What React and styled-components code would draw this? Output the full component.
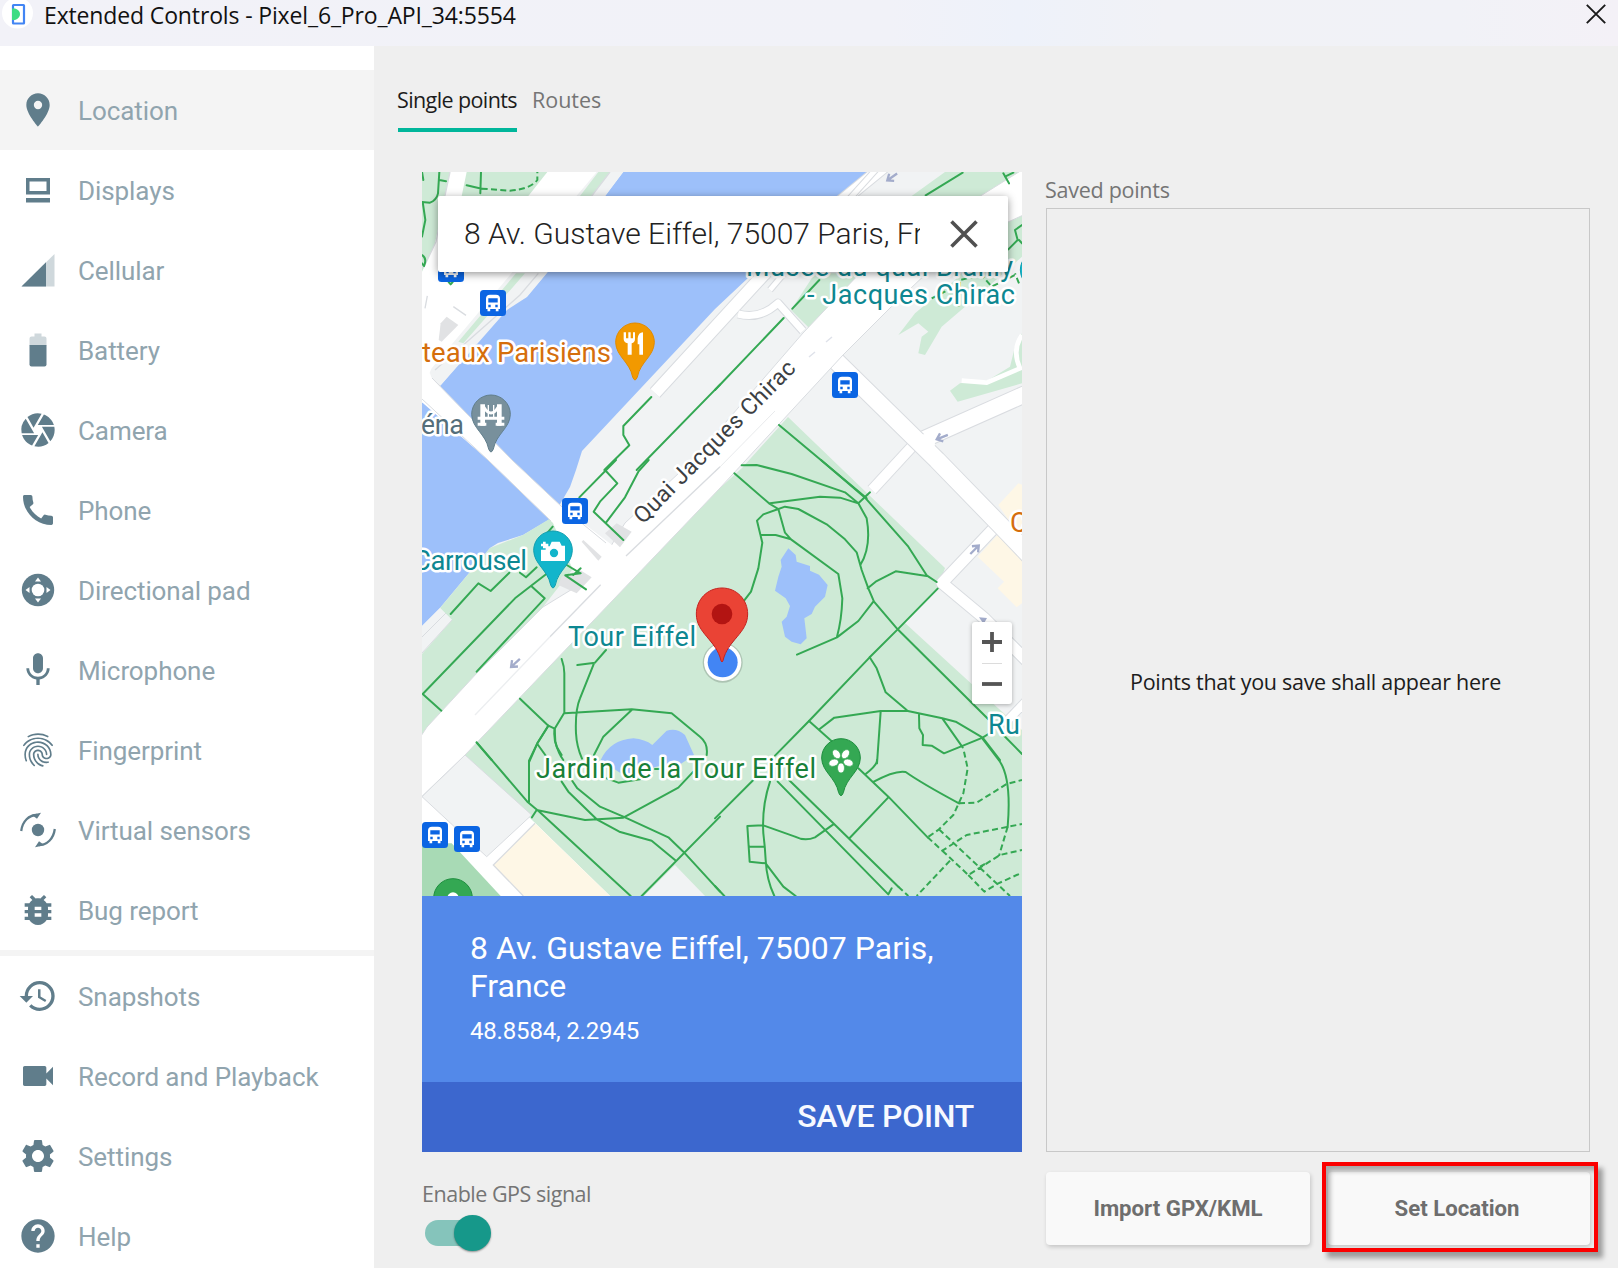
import React from 'react';
import styled, { createGlobalStyle } from 'styled-components';
import {
  MdLocationOn, MdCamera, MdCall, MdMic, MdFingerprint, MdBugReport,
  MdHistory, MdVideocam, MdSettings, MdHelp,
} from 'react-icons/md';

const GlobalStyle = createGlobalStyle`
  * { box-sizing: border-box; }
  body { margin: 0; background: #efefef; overflow: hidden; }
  button { border: 0; padding: 0; background: none; font: inherit; color: inherit; }
`;

const UI = '"Open Sans", "Noto Sans", sans-serif';
const ROBOTO = 'Roboto, "Liberation Sans", sans-serif';

/* ---------- window frame ---------- */

const Window = styled.div`
  display: grid;
  grid-template: 46px minmax(0, 1fr) / 374px minmax(0, 1fr);
  width: 1618px;
  height: 1268px;
  overflow: hidden;
  background: #efefef;
  font-family: ${ROBOTO};
`;

const TitleBar = styled.header`
  grid-column: 1 / -1;
  display: flex;
  align-items: flex-start;
  padding-left: 2px;
  background: linear-gradient(90deg, #f2f2f8 0%, #f1f2f8 55%, #eef2fa 63%, #f1f2f6 72%, #f1f2f7 90%, #f4f1f7 100%);
`;

const AppLogo = styled.svg`
  width: 32px;
  height: 30px;
`;

const Title = styled.h1`
  flex: 1;
  margin: -1px 0 0 10px;
  font: 400 23px/32px ${UI};
  letter-spacing: -0.14px;
  color: #111;
`;

const CloseButton = styled.button`
  width: 20px;
  height: 20px;
  margin: 4px 12px 0 0;
  svg { display: block; }
`;

/* ---------- side navigation ---------- */

const Sidebar = styled.nav`
  padding-top: 24px;
  background: #fff;
  overflow: hidden;
`;

const NavItem = styled.a`
  display: flex;
  align-items: center;
  gap: 20px;
  height: 80px;
  padding-left: 18px;
  background: ${(p) => (p.$active ? '#f4f4f4' : 'transparent')};
  color: #90a4ae;
  font-size: 26px;
  letter-spacing: -0.08px;
  svg { width: 40px; height: 40px; color: #607d8b; flex: none; }
`;

const NavLabel = styled.span`
  padding-top: 2px;
  line-height: 32px;
`;

const NavDivider = styled.hr`
  height: 6px;
  margin: 0;
  border: 0;
  background: #f4f4f4;
`;

/* ---------- main pane ---------- */

const Main = styled.main`
  display: flex;
  flex-direction: column;
  padding: 39px 28px 0 23px;
`;

const Tabs = styled.div`
  display: flex;
  gap: 15px;
  margin-bottom: 40px;
`;

const Tab = styled.button`
  height: 47px;
  font: 400 21.5px/30px ${UI};
  letter-spacing: ${(p) => (p.$active ? '-0.6px' : '0')};
  color: ${(p) => (p.$active ? '#1c1c1c' : '#757575')};
  padding-bottom: 17px;
  background: linear-gradient(#00b69b, #00b69b) no-repeat 1px 100% / ${(p) => (p.$active ? '120px 4px' : '0 0')};
`;

const Columns = styled.div`
  display: grid;
  grid-template-columns: 600px 544px;
  gap: 24px;
  margin-left: 25px;
`;

const Column = styled.section`
  display: flex;
  flex-direction: column;
`;

const Caption = styled.p`
  margin: 0 0 0 ${(p) => p.$shift || 0}px;
  padding-top: ${(p) => p.$top}px;
  font: 400 21.5px/30px ${UI};
  letter-spacing: ${(p) => p.$tracking}px;
  color: #757575;
`;

/* ---------- map card ---------- */

const MapArea = styled.div`
  position: relative;
  height: 724px;
  overflow: hidden;
`;

const SearchBox = styled.div`
  position: absolute;
  top: 24px;
  left: 16px;
  width: 570px;
  height: 76px;
  display: flex;
  align-items: center;
  padding: 0 30px 0 26px;
  justify-content: space-between;
  background: #fff;
  border-radius: 2px;
  box-shadow: 0 2px 9px rgba(0, 0, 0, 0.42);
`;

const SearchText = styled.span`
  width: 456px;
  overflow: hidden;
  white-space: nowrap;
  font-size: 30px;
  font-weight: 300;
  line-height: 40px;
  color: #222;
`;

const ZoomControl = styled.div`
  position: absolute;
  top: 450px;
  left: 550px;
  width: 40px;
  height: 82px;
  display: flex;
  flex-direction: column;
  align-items: center;
  background: #fff;
  border-radius: 3px;
  box-shadow: 0 1px 4px rgba(0, 0, 0, 0.3);
`;

const ZoomButton = styled.button`
  display: grid;
  place-items: center;
  width: 20px;
  height: 41px;
  padding-bottom: 1px;
  & + & { border-top: 1px solid #dcdcdc; padding-bottom: 0; }
`;

const Place = styled.div`
  height: 186px;
  padding: 33px 48px 0;
  background: #5389e9;
  color: #fff;
`;

const PlaceName = styled.h2`
  margin: 0 0 11px;
  font-size: 32px;
  font-weight: 400;
  line-height: 38px;
`;

const PlaceCoords = styled.p`
  margin: 0;
  font-size: 24px;
  line-height: 30px;
  letter-spacing: -0.18px;
`;

const SaveButton = styled.button`
  height: 70px;
  padding-right: 48px;
  background: #3c67ce;
  color: #f7f9ff;
  text-align: right;
  font-size: 32px;
  font-weight: 500;
  line-height: 68px;
  padding-bottom: 2px;
  letter-spacing: -0.25px;
`;

const Switch = styled.button`
  display: flex;
  align-items: center;
  justify-content: flex-end;
  width: 63px;
  height: 26px;
  margin: 11px 0 0 3px;
  border-radius: 13px;
  background: #85c4bb;
`;

const SwitchThumb = styled.span`
  width: 37px;
  height: 36px;
  flex: none;
  margin-right: -3px;
  border-radius: 50%;
  background: #16988a;
  box-shadow: 0 1px 2px rgba(0, 0, 0, 0.4);
`;

/* ---------- saved points ---------- */

const SavedList = styled.div`
  display: grid;
  place-items: center;
  height: 944px;
  margin-top: 3px;
  padding: 4px 5px 0 0;
  border: 1.5px solid #c8c8c8;
  font: 400 21.5px/30px ${UI};
  letter-spacing: -0.28px;
  color: #1c1c1c;
`;

const Actions = styled.div`
  display: grid;
  grid-template-columns: 264px 262px;
  gap: 18px;
  margin-top: 20px;
`;

const ActionButton = styled.button`
  position: relative;
  height: 73px;
  border-radius: 4px;
  background: #f9f9f9;
  box-shadow: 1px 2px 4px rgba(0, 0, 0, 0.18);
  color: #6e6e6e;
  font-size: 22.2px;
  font-weight: 700;
  padding: 0 ${(p) => p.$inset || 0}px 1px 0;
`;

const Highlight = styled.span`
  position: absolute;
  inset: -10px -8px -7px -6px;
  border: 4px solid #fb0000;
  box-shadow: 5px 6px 5px rgba(0, 0, 0, 0.35), inset 4px 5px 5px rgba(0, 0, 0, 0.3);
`;

/* ---------- navigation icons drawn by hand ---------- */

const DisplaysIcon = () => (
  <svg viewBox="0 0 40 40">
    <path fill="currentColor" fillRule="evenodd" d="M8 8h24v16.5H8zM11.5 11.500v9.500h17v-9.500zM8 28h24v4.500H8z" />
  </svg>
);

const CellularIcon = () => (
  <svg viewBox="0 0 40 40">
    <path fill="#cfd8dc" d="M3.500 36.500L36.500 4v32.500z" />
    <path fill="currentColor" d="M3.500 36.500L28 12.300v24.200z" />
  </svg>
);

const BatteryIcon = () => (
  <svg viewBox="0 0 40 40">
    <path fill="#cfd8dc" d="M16.500 3.500h7V6.500h3q2 0 2 2V15.500H11.500V8.500q0-2 2-2h3z" />
    <path fill="currentColor" d="M11.500 15h17v19.500q0 2-2 2h-13q-2 0-2-2z" />
  </svg>
);

const DpadIcon = () => (
  <svg viewBox="0 0 40 40">
    <circle cx="20" cy="20" r="16.200" fill="currentColor" />
    <circle cx="20" cy="20" r="6.300" fill="#fff" />
    <path fill="#fff" d="M20 7.500l3 4h-6zM20 32.500l3-4h-6zM7.500 20l4-3v6zM32.500 20l-4-3v6z" />
  </svg>
);

const SensorsIcon = () => (
  <svg viewBox="0 0 40 40">
    <circle cx="20" cy="20" r="6.200" fill="currentColor" />
    <g fill="none" stroke="currentColor" strokeWidth="2.300">
      <path d="M3.200 21C4.500 11 11 5 19 5" />
      <path d="M36.800 19C35.500 29 29 35 21 35" />
    </g>
    <path fill="currentColor" d="M13.500 4.800L23 2.800 19 8.800zM26.500 35.200L17 37.200 21 31.200z" />
  </svg>
);

const NAV = [
  { label: 'Location', icon: MdLocationOn, active: true },
  { label: 'Displays', icon: DisplaysIcon },
  { label: 'Cellular', icon: CellularIcon },
  { label: 'Battery', icon: BatteryIcon },
  { label: 'Camera', icon: MdCamera },
  { label: 'Phone', icon: MdCall },
  { label: 'Directional pad', icon: DpadIcon },
  { label: 'Microphone', icon: MdMic },
  { label: 'Fingerprint', icon: MdFingerprint },
  { label: 'Virtual sensors', icon: SensorsIcon },
  { label: 'Bug report', icon: MdBugReport },
  { divider: true, label: 'divider' },
  { label: 'Snapshots', icon: MdHistory },
  { label: 'Record and Playback', icon: MdVideocam },
  { label: 'Settings', icon: MdSettings },
  { label: 'Help', icon: MdHelp },
];

/* ---------- map drawing ---------- */

const MapSvg = styled.svg`
  display: block;
  font-family: ${ROBOTO};
`;

const MapLabel = styled.text`
  font-size: ${(p) => p.$size || 27}px;
  font-weight: ${(p) => p.$weight || 400};
  fill: ${(p) => p.$color};
  stroke: #fff;
  stroke-width: 5px;
  stroke-linejoin: round;
  paint-order: stroke;
`;

const TEAL = '#0d8791';

// Detail is drawn in tiles of 3 units per pixel; x and y are the tile's corner.
const Tile = ({ x, y, children }) => (
  <g transform={`translate(${x} ${y}) scale(0.33333)`}>{children}</g>
);

const Road = ({ d, w }) => (
  <g fill="none" strokeLinejoin="round">
    <path d={d} stroke="#d9dce0" strokeWidth={w + 2} />
    <path d={d} stroke="#fff" strokeWidth={w} />
  </g>
);

const Paths = ({ d, dashed }) => (
  <path d={d} fill="none" stroke="#34a853" strokeWidth="6" strokeLinejoin="round"
    strokeLinecap={dashed ? 'butt' : 'round'} strokeDasharray={dashed ? '18 10' : undefined} />
);

const Pin = ({ x, y, color, edge, children }) => (
  <g transform={`translate(${x} ${y})`}>
    <path d="M-58 0A58 58 0 0 1 58 0C57 42 16 58 7 104Q0 122-7 104C-16 58-57 42-58 0Z" fill={color} stroke={edge} strokeWidth="3" />
    {children}
  </g>
);

const BusStop = ({ x, y }) => (
  <g transform={`translate(${x} ${y})`}>
    <rect x="-13" y="-13" width="26" height="26" rx="3.500" fill="#0b65e3" />
    <path fill="#fff" fillRule="evenodd" d="M-7-4.500Q-7-8.300-3-8.300H3Q7-8.300 7-4.500V6H5.500V8.300H2.800V6H-2.800V8.300H-5.500V6H-7zM-4.700-4.800V-.600H4.700V-4.800zM-4.700 1.800V4.200H-2.300V1.800zM2.300 1.800V4.200H4.700V1.800z" />
  </g>
);

const Arrow = ({ x, y, r }) => (
  <path transform={`translate(${x} ${y}) rotate(${r})`} d="M-20 0H14M0-13L16 0 0 13" fill="none" stroke="#a3accb" strokeWidth="7" />
);

const ParisMap = () => (
  <MapSvg width="600" height="724" viewBox="422 172 600 724">
    <rect x="422" y="172" width="600" height="724" fill="#f1f3f4" />

    {/* Seine */}
    <path fill="#9dc0fa" d="M623 172H880L848 195 748 278 715 309 582 451 576 470 570 487 552 518 523 535 498 543 490 548 440 608 422 626V403L441 385 507 310 527 297 547 273 606 195Z" />

    {/* north-west bank */}
    <Tile x={410} y={160}>
      <path fill="#fff" d="M36 36H560L300 345 65 625 36 690Z" />
      <path fill="#fff" d="M36 700L65 655 60 640 36 640Z" />
      <path fill="#f1f3f4" d="M600 36H640L585 108 412 336 350 410 290 445 92 675 65 652 300 400Z" />
      <path fill="#ceead6" d="M565 36H600L545 108H510ZM318 340H345L160 550 145 545Z" />
      <path fill="#ceead6" d="M36 36H120L100 130 75 250 36 335Z" />
      <path fill="#ceead6" d="M170 36H412L355 108H155Z" />
      <path fill="#e1e2e4" d="M92 490L110 470 145 495 95 545 86 540Z" />
      <path fill="none" stroke="#d9dce0" strokeWidth="4" d="M130 440L168 466M45 445L52 408M600 36L545 108M385 340L330 405 75 630M120 36L100 130 78 245 40 325M36 722L62 655 92 680" />
      <Paths d="M36 36L40 60M88 36L84 100Q80 120 60 128L36 126M88 60L108 64M213 36L211 100M170 76L215 86M38 126L46 180 36 230M36 285Q52 295 42 318L36 310M116 366L122 373 128 366" />
      <Paths dashed d="M215 86L300 92Q360 88 382 60L382 36" />
    </Tile>

    {/* right bank quay */}
    <Road d="M1010 150L892 160 800 235 655 393" w={12} />
    <Road d="M880 165L808 245 770 290" w={5} />
    <Road d="M738 314Q760 320 778 303L803 331" w={7} />
    <Tile x={715} y={160}>
      <path fill="#ceead6" d="M690 36H921V60L800 108H590ZM870 190L921 165V290L820 380 680 500 630 585 610 580 620 530 640 515 610 490 550 525 600 460 720 360Z" />
      <path fill="#ceead6" d="M300 340H420L440 345 283 505 228 450Z" />
      <path fill="#ceead6" d="M735 670L705 692 728 725 921 670V520L900 560 885 620 820 660Z" />
      <path fill="none" stroke="#fff" strokeWidth="14" d="M740 662L815 668 915 625Q890 570 921 525" />
    </Tile>

    {/* gardens */}
    <path fill="#ceead6" d="M551 518L523 535 490 548 440 608 452 620 422 652V745L427 727 477 673 543 607 575 566 555 525Z" />
    <path fill="#f1f3f4" d="M440 608L452 620 422 654V626Z" />
    <path fill="none" stroke="#d9dce0" d="M446 613L422 637M452 620L422 653" />
    <path fill="#ceead6" d="M720 488L742 468 788 417 843 470 945 568 938 588 905 623 998 708 1022 730V896H610L535 823 460 755Z" />
    <path fill="#f1f3f4" d="M675 865L705 896H644Z" />

    {/* south-west corner */}
    <Tile x={410} y={700}>
      <path fill="#fff" d="M165 165L600 588H36V290Z" />
      <path fill="#f1f3f4" stroke="#d9dce0" strokeWidth="3" d="M165 165L365 345 230 470 36 290Z" />
      <path fill="#fef7e6" d="M375 370L250 495 340 588H600Z" />
      <path fill="none" stroke="#d9dce0" strokeWidth="4" d="M375 370L250 495 340 588" />
      <path fill="#a8dab5" d="M36 430H125L272 588H36Z" />
    </Tile>

    {/* streets on the east */}
    <Tile x={715} y={460}>
      <path fill="#fef7e6" d="M910 70L921 74V240L850 135ZM850 222L921 290V430L905 442 848 385 867 365 788 290Z" />
    </Tile>
    <Road d="M918 440L872 490" w={10} />
    <Road d="M997 525L942 583 984 618 1030 664" w={11} />
    <Road d="M1030 697L1008 720" w={8} />
    <Road d="M922 440L1030 392" w={16} />
    <Road d="M832 357L937 460 1007 532 1030 556" w={17} />
    <circle cx="925" cy="444" r="10" fill="#fff" />

    {/* Quai Jacques Chirac */}
    <path fill="#fff" stroke="#d9dce0" d="M1030 165L982 195 860 273 803 333 693 460 625 523 592 577 543 607 477 673 427 727 415 745V803L465 755 720 488 843 355 890 308 930 270 1008 222 1030 212Z" />
    <path fill="#fff" d="M430 376L512 460 562 507 612 545 640 560 590 610 553 523 488 460 415 396V380Z" />
    <path fill="none" stroke="#d9dce0" d="M432 378L512 460 562 507 606 543M422 399L488 460 551 521" />
    <Tile x={410} y={460}>
      <path fill="#e1e2e4" d="M585 220L620 190 665 215 630 262ZM520 240L575 290 565 302 515 245ZM455 350L510 330 545 352 500 400 445 375Z" />
      <path fill="none" stroke="#d9dce0" strokeWidth="4" d="M930 20L648 288M572 374L420 530" />
      <path fill="none" stroke="#eceef0" strokeWidth="4" d="M420 530L195 765" />
      <Paths d="M618 0L508 112M585 30L622 70 570 125 551 155 640 240M716 0L685 35 645 112 588 188M428 200L385 250M380 322L348 352 330 338M298 338L242 393 205 370 122 462M412 340L315 415 38 702 94 752M366 380L404 415 200 635M470 315L512 340 466 346M466 346L528 388M512 325L490 345" />
      <Paths d="M455 597Q463 620 463 640V760M588 570L555 608 502 615M552 610L510 715Q495 750 498 820 500 860 516 896M463 760L665 748 785 760 870 830Q895 850 890 885M665 750L580 830 552 885M330 716L415 797 434 806M462 760L434 806 436 845Q445 880 460 900M415 797L382 850 358 905M382 852L408 888M200 848L245 900" />
    </Tile>
    <path fill="none" stroke="#dfe2ea" strokeWidth="1.500" d="M809 357L815 352M826 342L832 337" />
    <path fill="none" stroke="#d9dce0" d="M775 411L715 472" opacity=".6" />

    {/* ponds */}
    <Tile x={715} y={460}>
      <path fill="#9dc0fa" d="M220 265L242 285 245 305 285 318V332L312 344 338 375 330 410 300 440 290 462 268 475 275 535 257 553 230 545 210 530 200 485 215 470 225 438 212 415 180 392 190 350 200 320 197 300Z" />
    </Tile>
    <Tile x={410} y={700}>
      <path fill="#9dc0fa" d="M572 180Q600 120 670 115 705 118 727 135L770 92Q800 82 825 105L852 165 800 200 760 195 640 225Z" />
    </Tile>

    {/* park paths */}
    <Tile x={410} y={160}>
      <Paths d="M724 711L640 798V825L658 856 583 930M930 674L680 930" />
    </Tile>
    <Tile x={715} y={160}>
      <Paths d="M0 690L206 474M232 446L313 360M632 106L743 38M865 40L882 70M895 38L870 50M921 195L900 210 908 240 880 268M912 240L921 250" />
      <Paths dashed d="M730 440L735 360 800 345 830 380 900 345M650 415L700 390M912 370L900 340" />
      <Paths d="M192 795L455 1015" />
    </Tile>
    <Tile x={715} y={460}>
      <Paths d="M318 0L452 115 580 260 635 346 665 366M80 16L125 15 230 42 390 97 430 130 465 97M58 40L162 130 190 147M165 130L315 110 375 113 430 130 455 175Q470 260 436 315M190 147L145 163 126 182 142 248 130 325 108 395 85 425M145 163L210 140 250 147 335 193 390 238 425 277 440 330 460 385 477 425 548 508 820 778M190 147L210 218 228 238 370 342 382 415Q380 480 366 530M136 225H182L228 238M246 584L366 532 430 483 475 425M458 385L482 365 542 334 635 348M668 386L548 508 464 592 282 783 180 887" />
      <Paths d="M464 592L485 625 512 697 575 750M282 783L352 845M313 808L358 773 497 753 575 752 682 775 722 785 803 833 820 822M497 755L486 910M612 765L613 805 624 825 623 855 650 857 687 880 803 833M682 775L743 862M803 833L855 900M868 828L921 882" />
    </Tile>
    <Tile x={715} y={700}>
      <Paths d="M430 205L520 290 638 412M486 180Q487 195 452 222M475 246Q540 210 572 216 620 250 732 310M520 292L404 414M222 240L550 560M188 245L520 583 530 565M165 245Q140 320 145 400 150 440 152 480 155 540 178 588M97 378L145 376 240 410Q270 425 300 412L355 373M97 378L104 485 152 490M104 440H148M152 490L205 560 242 588M803 117L855 185Q890 240 878 380M0 355L115 240M0 558L28 588" />
      <Paths dashed d="M747 155L758 205 745 280 715 345 672 388 638 412M732 310L785 308 875 252 921 240M672 388L885 588M638 412L682 452 755 405 921 372M682 452L760 525 855 465 921 450M705 482L605 588M760 525L808 575 850 550 921 518M878 380L852 468M550 560L580 588M795 500L810 492" />
    </Tile>
    <Tile x={410} y={700}>
      <Paths d="M200 127L352 305 388 335 662 588M415 77L382 130 357 182V305M380 330L366 352M380 330L525 360 640 353 805 263 850 215M434 86Q430 115 440 140L455 165M455 245L475 275 560 358 628 395 725 422 795 480M485 240L502 265 570 320 640 350 775 412 820 455 930 575M695 588L930 350M590 235L625 248 690 238M735 207H750" />
    </Tile>

    <Tile x={715} y={160}>
      <Arrow x={530} y={52} r={145} />
      <Arrow x={680} y={832} r={158} />
    </Tile>
    <Tile x={715} y={460}><Arrow x={780} y={268} r={-45} /><path fill="#a3accb" d="M792 472L816 474 806 492Z" /></Tile>
    <Tile x={410} y={460}><Arrow x={315} y={610} r={137} /></Tile>

    <BusStop x={451} y={269} />
    <BusStop x={493} y={303} />
    <BusStop x={845} y={385} />
    <BusStop x={575} y={511} />
    <BusStop x={435} y={835} />
    <BusStop x={467} y={839} />

    {/* place pins */}
    <Tile x={410} y={160}>
      <Pin x={675} y={547} color="#f29900" edge="#e18a00">
        <path fill="#fff" d="M-34-30H-27V-12H-20V-30H-13V-12H-6V-30H0V-10Q0 0-10 3V37H-22V3Q-34 0-34-10ZM8-12Q10-30 24-30V37H13V6H8Z" />
      </Pin>
      <Pin x={243} y={763} color="#78909c" edge="#607d8b">
        <g fill="none" stroke="#fff">
          <path strokeWidth="14" d="M-25-30V34M25-30V34" />
          <path strokeWidth="9" d="M-40 12H40M-40 30H-14M14 30H40M-22-22Q0 14 22-22" />
          <path strokeWidth="4" d="M-8-28V12M8-28V12" />
        </g>
      </Pin>
    </Tile>
    <Tile x={410} y={460}>
      <Pin x={429} y={271} color="#12b5cb" edge="#129eaf">
        <path fill="#fff" d="M-36-2H-22V-12H-10L-4-26H20L26-14H36V32H-36ZM-30-26H-22V-20H-14V-12H-22V-6H-30V-12H-36V-20H-30Z" />
        <circle cx="3" cy="8" r="15" fill="#12b5cb" stroke="#fff" strokeWidth="5" />
      </Pin>
    </Tile>
    <Tile x={715} y={700}>
      <Pin x={378} y={174} color="#34a853" edge="#1e8e3e">
        <g fill="#fff" stroke="#34a853" strokeWidth="2">
          {[36, 108, 180, 252, 324].map((a) => (
            <ellipse key={a} cx="0" cy="-23" rx="10.500" ry="15" transform={`translate(0 7) rotate(${a})`} />
          ))}
        </g>
        <circle cx="0" cy="7" r="6" fill="#34a853" />
      </Pin>
    </Tile>
    <Tile x={410} y={700}>
      <Pin x={129} y={594} color="#34a853" edge="#1e8e3e"><circle r="17" fill="#fff" /></Pin>
    </Tile>
    <Tile x={715} y={160}><Pin x={974} y={330} color="#12b5cb" edge="#129eaf" /></Tile>

    {/* labels */}
    <MapLabel x="422" y="362" textLength="189" $color="#d56e0c" $weight={450} $size={27.500}>teaux Parisiens</MapLabel>
    <MapLabel x="421" y="434" textLength="43" $color="#546e7a" $weight={450}>éna</MapLabel>
    <MapLabel x="413" y="570" textLength="114" $color={TEAL} $weight={450} $size={27.500}>Carrousel</MapLabel>
    <MapLabel x="568" y="646" textLength="128" $color={TEAL}>Tour Eiffel</MapLabel>
    <MapLabel x="536" y="778" textLength="280" $color="#188038">Jardin de la Tour Eiffel</MapLabel>
    <MapLabel x="746" y="276" textLength="267" $color={TEAL} $weight={450}>Musée du quai Branly</MapLabel>
    <MapLabel x="807" y="304" textLength="208" $color={TEAL} $weight={450}>- Jacques Chirac</MapLabel>
    <MapLabel x="988" y="734" $color={TEAL} textLength="32">Ru</MapLabel>
    <MapLabel x="1010" y="532" $color="#d56e0c">C</MapLabel>
    <MapLabel transform="translate(643 525) rotate(-45.300)" textLength="219" $color="#3c4043" $size={23} $weight={450}>Quai Jacques Chirac</MapLabel>

    {/* current position and selected place */}
    <Tile x={715} y={460}>
      <Pin x={21} y={490} color="#12a0b0" edge="#0d8791" />
      <circle cx="23" cy="608" r="60" fill="rgba(0,0,0,.16)" />
      <circle cx="23" cy="607" r="56" fill="#fff" />
      <circle cx="23" cy="607" r="45" fill="#4285f4" />
      <path fill="#ea4335" stroke="#c5221f" strokeWidth="3" d="M21 384C66 384 98 420 98 462 98 520 38 540 24 602Q21 610 18 602C4 540-56 520-56 462-56 420-24 384 21 384Z" />
      <circle cx="21" cy="462" r="31" fill="#b31412" />
    </Tile>
  </MapSvg>
);

export default function App() {
  return (
    <>
      <GlobalStyle />
      <Window>
        <TitleBar>
          <AppLogo viewBox="0 0 32 30">
            <circle cx="15.500" cy="13" r="15.500" fill="#fff" />
            <rect x="11" y="5" width="11" height="18.500" fill="none" stroke="#4285f4" strokeWidth="2.200" rx="0.500" />
            <path d="M10 8.500H13Q18 10 18 14T13 20H10Z" fill="#3ddc84" />
          </AppLogo>
          <Title>Extended Controls - Pixel_6_Pro_API_34:5554</Title>
          <CloseButton aria-label="Close">
            <svg width="20" height="20" viewBox="0 0 20 20">
              <path d="M.8.800L19.200 19.200M19.200.800L.8 19.200" stroke="#1a1a1a" strokeWidth="1.900" />
            </svg>
          </CloseButton>
        </TitleBar>

        <Sidebar>
          {NAV.map(({ label, icon: Icon, active, divider }) =>
            divider ? <NavDivider key={label} /> : (
              <NavItem key={label} $active={active}>
                <Icon />
                <NavLabel>{label}</NavLabel>
              </NavItem>
            ))}
        </Sidebar>

        <Main>
          <Tabs>
            <Tab $active>Single points</Tab>
            <Tab>Routes</Tab>
          </Tabs>
          <Columns>
            <Column>
              <MapArea>
                <ParisMap />
                <SearchBox>
                  <SearchText>8 Av. Gustave Eiffel, 75007 Paris, France</SearchText>
                  <svg width="28" height="28" viewBox="0 0 28 28">
                    <path d="M1.500 1.500L26.500 26.500M26.500 1.500L1.500 26.500" stroke="#505050" strokeWidth="3.600" />
                  </svg>
                </SearchBox>
                <ZoomControl>
                  <ZoomButton aria-label="Zoom in">
                    <svg width="20" height="20" viewBox="0 0 20 20">
                      <path d="M0 10H20M10 0V20" stroke="#555" strokeWidth="3.800" />
                    </svg>
                  </ZoomButton>
                  <ZoomButton aria-label="Zoom out">
                    <svg width="20" height="20" viewBox="0 0 20 20">
                      <path d="M0 10H20" stroke="#555" strokeWidth="3.800" />
                    </svg>
                  </ZoomButton>
                </ZoomControl>
              </MapArea>
              <Place>
                <PlaceName>8 Av. Gustave Eiffel, 75007 Paris, France</PlaceName>
                <PlaceCoords>48.8584, 2.2945</PlaceCoords>
              </Place>
              <SaveButton>SAVE POINT</SaveButton>
              <Caption $top={27} $tracking={-0.48}>Enable GPS signal</Caption>
              <Switch role="switch" aria-checked="true"><SwitchThumb /></Switch>
            </Column>
            <Column>
              <Caption $top={3} $tracking={-0.27} $shift={-1}>Saved points</Caption>
              <SavedList>Points that you save shall appear here</SavedList>
              <Actions>
                <ActionButton>Import GPX/KML</ActionButton>
                <ActionButton $inset={4}>Set Location<Highlight /></ActionButton>
              </Actions>
            </Column>
          </Columns>
        </Main>
      </Window>
    </>
  );
}
